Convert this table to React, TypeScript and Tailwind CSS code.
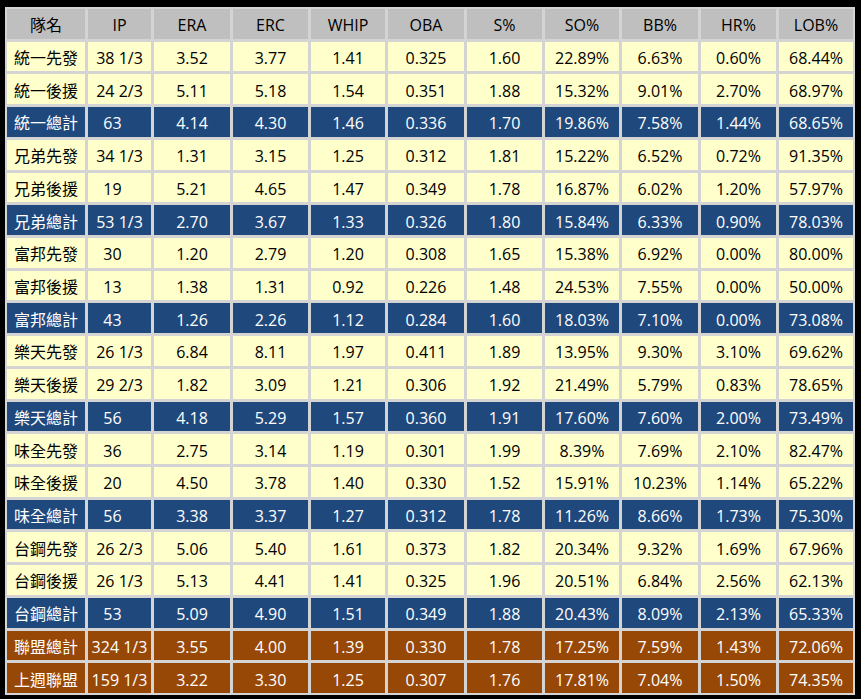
import React from "react";

type Row = { c: "y" | "b" | "o"; d: string[] };

const header = ["隊名", "IP", "ERA", "ERC", "WHIP", "OBA", "S%", "SO%", "BB%", "HR%", "LOB%"];

const rows: Row[] = [
  { c: "y", d: ["統一先發", "38 1/3", "3.52", "3.77", "1.41", "0.325", "1.60", "22.89%", "6.63%", "0.60%", "68.44%"] },
  { c: "y", d: ["統一後援", "24 2/3", "5.11", "5.18", "1.54", "0.351", "1.88", "15.32%", "9.01%", "2.70%", "68.97%"] },
  { c: "b", d: ["統一總計", "63", "4.14", "4.30", "1.46", "0.336", "1.70", "19.86%", "7.58%", "1.44%", "68.65%"] },
  { c: "y", d: ["兄弟先發", "34 1/3", "1.31", "3.15", "1.25", "0.312", "1.81", "15.22%", "6.52%", "0.72%", "91.35%"] },
  { c: "y", d: ["兄弟後援", "19", "5.21", "4.65", "1.47", "0.349", "1.78", "16.87%", "6.02%", "1.20%", "57.97%"] },
  { c: "b", d: ["兄弟總計", "53 1/3", "2.70", "3.67", "1.33", "0.326", "1.80", "15.84%", "6.33%", "0.90%", "78.03%"] },
  { c: "y", d: ["富邦先發", "30", "1.20", "2.79", "1.20", "0.308", "1.65", "15.38%", "6.92%", "0.00%", "80.00%"] },
  { c: "y", d: ["富邦後援", "13", "1.38", "1.31", "0.92", "0.226", "1.48", "24.53%", "7.55%", "0.00%", "50.00%"] },
  { c: "b", d: ["富邦總計", "43", "1.26", "2.26", "1.12", "0.284", "1.60", "18.03%", "7.10%", "0.00%", "73.08%"] },
  { c: "y", d: ["樂天先發", "26 1/3", "6.84", "8.11", "1.97", "0.411", "1.89", "13.95%", "9.30%", "3.10%", "69.62%"] },
  { c: "y", d: ["樂天後援", "29 2/3", "1.82", "3.09", "1.21", "0.306", "1.92", "21.49%", "5.79%", "0.83%", "78.65%"] },
  { c: "b", d: ["樂天總計", "56", "4.18", "5.29", "1.57", "0.360", "1.91", "17.60%", "7.60%", "2.00%", "73.49%"] },
  { c: "y", d: ["味全先發", "36", "2.75", "3.14", "1.19", "0.301", "1.99", "8.39%", "7.69%", "2.10%", "82.47%"] },
  { c: "y", d: ["味全後援", "20", "4.50", "3.78", "1.40", "0.330", "1.52", "15.91%", "10.23%", "1.14%", "65.22%"] },
  { c: "b", d: ["味全總計", "56", "3.38", "3.37", "1.27", "0.312", "1.78", "11.26%", "8.66%", "1.73%", "75.30%"] },
  { c: "y", d: ["台鋼先發", "26 2/3", "5.06", "5.40", "1.61", "0.373", "1.82", "20.34%", "9.32%", "1.69%", "67.96%"] },
  { c: "y", d: ["台鋼後援", "26 1/3", "5.13", "4.41", "1.41", "0.325", "1.96", "20.51%", "6.84%", "2.56%", "62.13%"] },
  { c: "b", d: ["台鋼總計", "53", "5.09", "4.90", "1.51", "0.349", "1.88", "20.43%", "8.09%", "2.13%", "65.33%"] },
  { c: "o", d: ["聯盟總計", "324 1/3", "3.55", "4.00", "1.39", "0.330", "1.78", "17.25%", "7.59%", "1.43%", "72.06%"] },
  { c: "o", d: ["上週聯盟", "159 1/3", "3.22", "3.30", "1.25", "0.307", "1.76", "17.81%", "7.04%", "1.50%", "74.35%"] },
];

const rowCls: Record<Row["c"], string> = {
  y: "bg-[#ffffcc] text-black",
  b: "bg-[#1f497d] text-white",
  o: "bg-[#984806] text-white",
};

export default function App() {
  return (
    <div
      className="w-[861px] h-[699px] bg-black pl-[5px] pt-[7px]"
      style={{ fontFamily: '"Open Sans", "Noto Sans CJK TC", sans-serif' }}
    >
      <div className="w-[850px] h-[688px] bg-[#d4d4d4] p-[2px] grid grid-cols-[78px_63px_76px_75px_74px_76px_75px_74px_76px_75px_1fr] grid-rows-[repeat(21,1fr)] gap-[3px] text-[16px] leading-none">
        {header.map((h, i) => (
          <div key={"h" + i} className="bg-[#bfbfbf] text-black flex items-center justify-center pt-[3px]">
            {h}
          </div>
        ))}
        {rows.map((r, ri) =>
          r.d.map((v, ci) => (
            <div
              key={ri + "-" + ci}
              className={
                rowCls[r.c] +
                " flex items-center justify-center pt-[3px]" +
                (ci === 1 && !v.includes("/") ? " pr-[14px]" : "")
              }
            >
              {v}
            </div>
          ))
        )}
      </div>
    </div>
  );
}
